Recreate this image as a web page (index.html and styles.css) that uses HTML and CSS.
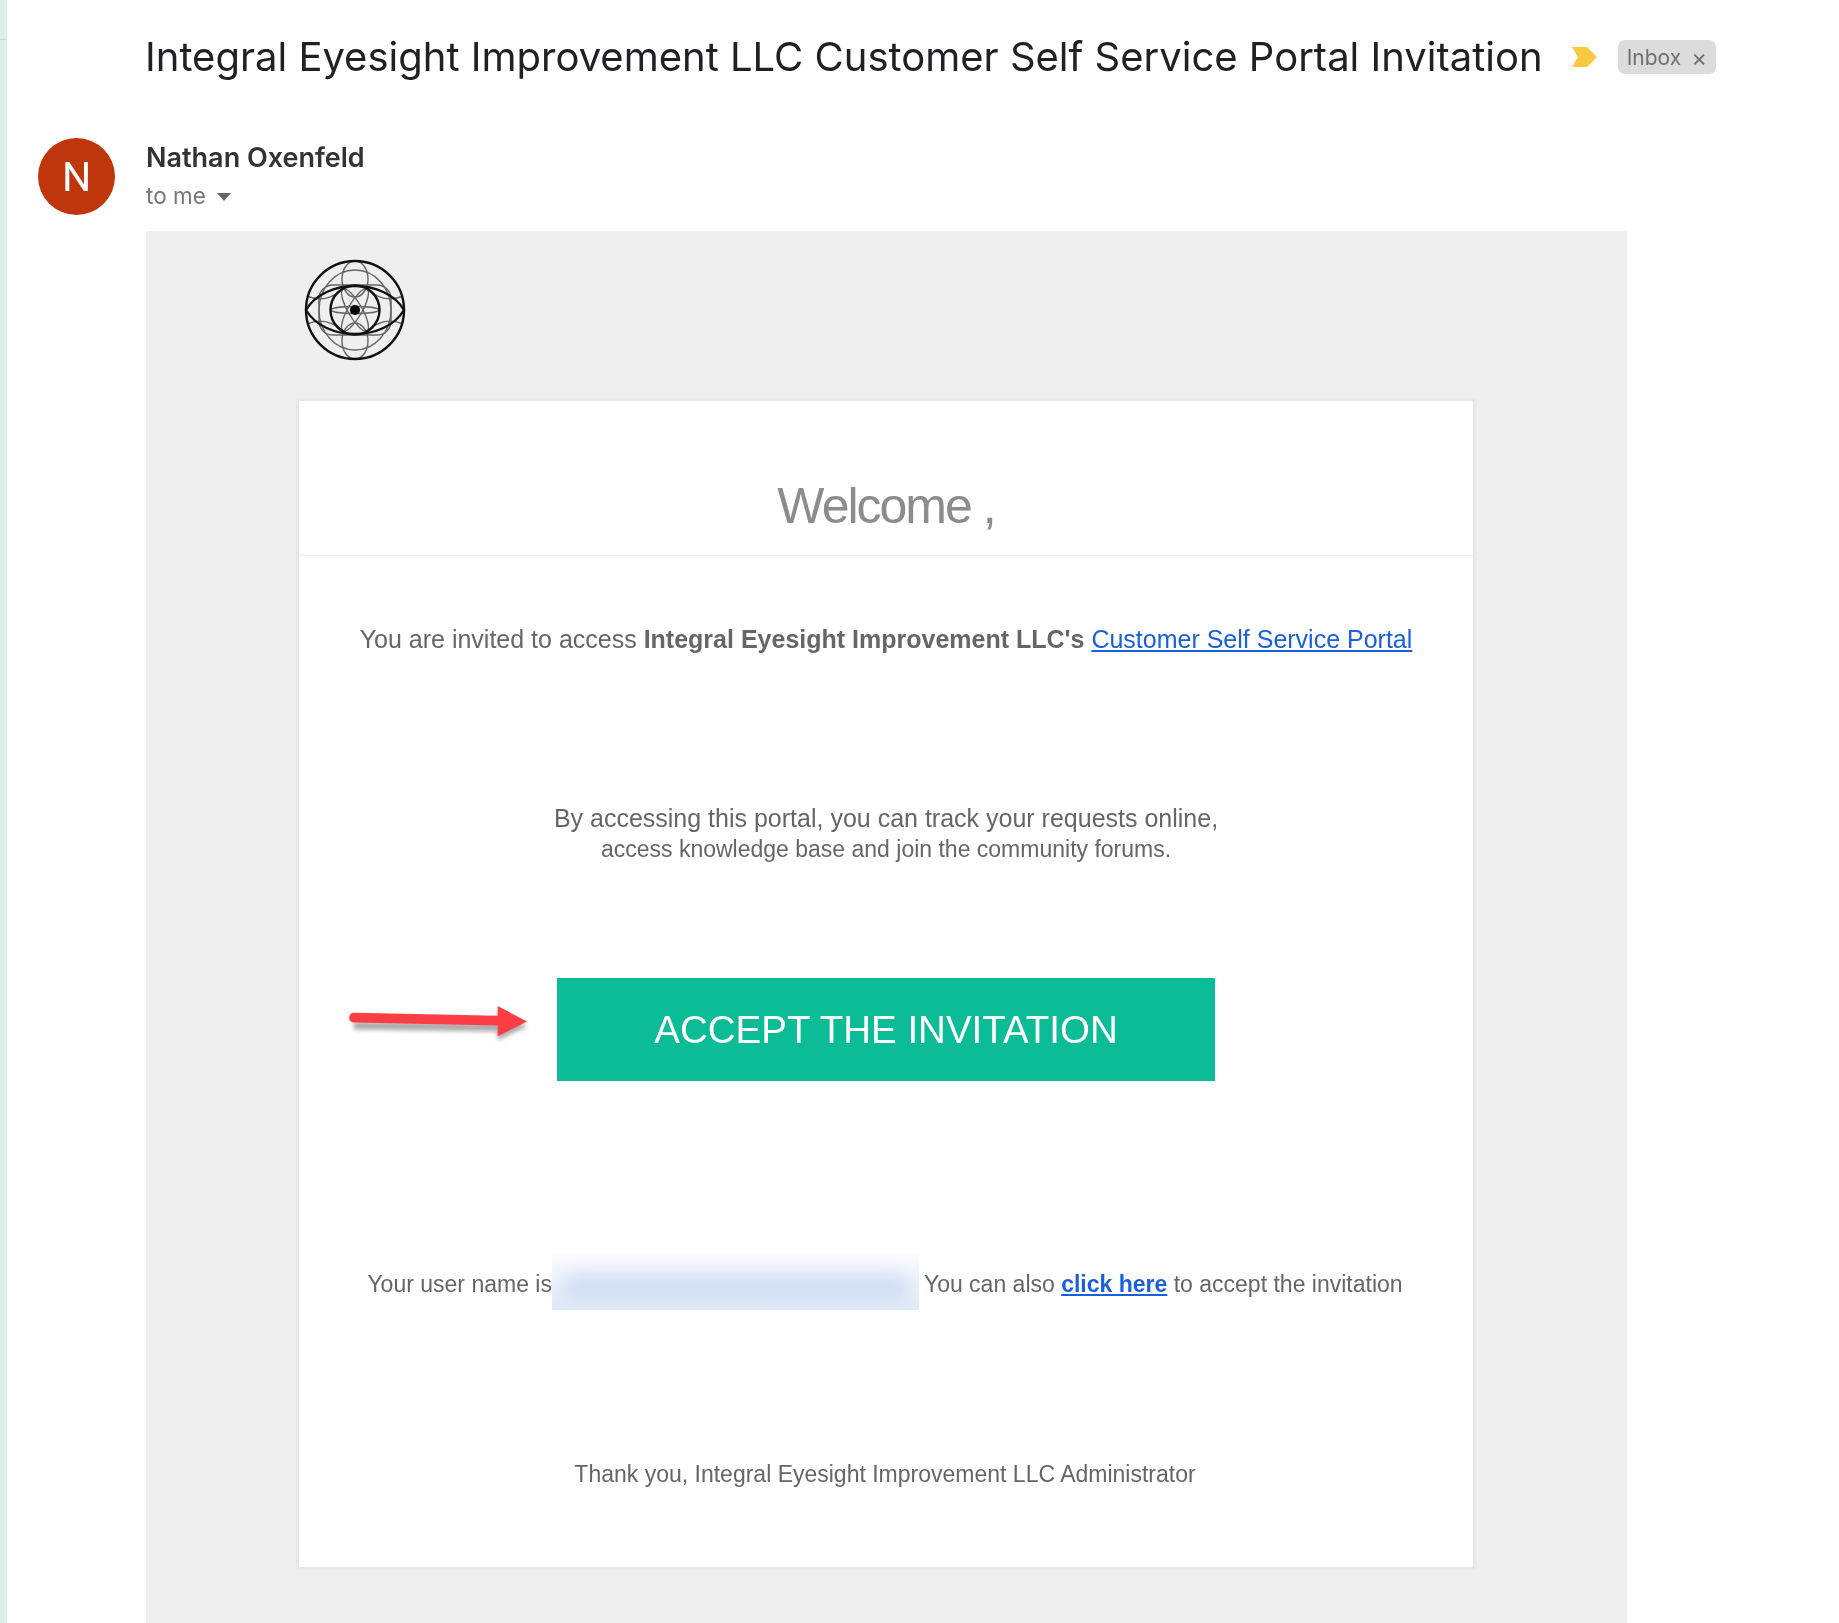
FILE: index.html
```html
<!DOCTYPE html>
<html lang="en">
<head>
<meta charset="utf-8">
<title>Integral Eyesight Improvement LLC Customer Self Service Portal Invitation</title>
<link rel="stylesheet" href="styles.css">
</head>
<body>
<div class="page">
  <div class="strip"><span class="strip-line"></span></div>
  <main class="mail">
    <header class="subject">
      <h1 class="subject-text">Integral Eyesight Improvement LLC Customer Self Service Portal Invitation</h1>
      <svg class="marker" viewBox="0 0 25 20" aria-hidden="true"><path d="M0 0H15L25 10L15 20H0L6 10Z"/></svg>
      <span class="chip">Inbox<span class="chip-x">×</span></span>
    </header>
    <div class="message">
      <div class="avatar">N</div>
      <div class="content">
        <div class="sender">
          <div class="sender-name">Nathan Oxenfeld</div>
          <div class="recipient">to me<span class="caret"></span></div>
        </div>
        <section class="panel">
          <svg class="logo" viewBox="-52 -52 104 104" aria-hidden="true">
            <g class="logo-thin">
              <ellipse rx="24" ry="3.5"/>
              <ellipse rx="24" ry="7" transform="rotate(60)"/>
              <ellipse rx="24" ry="7" transform="rotate(120)"/>
              <ellipse cy="-31" rx="13" ry="18"/>
              <ellipse cy="31" rx="13" ry="18"/>
              <rect x="-36" y="-25" width="72" height="50" rx="14"/>
              <ellipse rx="36" ry="40"/>
              <path d="M-48 -14Q-30 -6 -13 -20M48 -14Q30 -6 13 -20M-48 14Q-30 6 -13 20M48 14Q30 6 13 20"/>
            </g>
            <g class="logo-bold">
              <circle r="49"/>
              <circle r="24.5"/>
              <path d="M-49 0C-30 -32 30 -32 49 0C30 32 -30 32 -49 0Z"/>
            </g>
            <circle class="logo-dot" r="5"/>
          </svg>
          <article class="card">
            <h2 class="welcome">Welcome ,</h2>
            <p class="invite">You are invited to access <b>Integral Eyesight Improvement LLC's</b> <a href="#">Customer Self Service Portal</a></p>
            <p class="about">By accessing this portal, you can track your requests online,<br><span class="about-small">access knowledge base and join the community forums.</span></p>
            <div class="cta">
              <svg class="arrow" viewBox="0 0 190 44" aria-hidden="true">
                <path class="arrow-shadow" d="M6 15L153 17V3L183 20L153 34V25L6 23Z"/>
                <path class="arrow-body" d="M6 8L153 11V1L183 17L153 32V21L6 18A5 5 0 0 1 6 8Z"/>
              </svg>
              <a class="button" href="#">ACCEPT THE INVITATION</a>
            </div>
            <p class="username">Your user name is<span class="redacted"><span class="redacted-blur"></span></span>You can also <a href="#"><b>click here</b></a> to accept the invitation</p>
            <p class="thanks">Thank you, Integral Eyesight Improvement LLC Administrator</p>
          </article>
        </section>
      </div>
    </div>
  </main>
</div>
</body>
</html>
```
FILE: styles.css
```css
html, body {
  margin: 0;
  height: 100%;
  background: #fff;
}
.page {
  display: flex;
  height: 1623px;
  overflow: hidden;
  filter: blur(0.6px);
}
.strip {
  flex: none;
  width: 7px;
  background: #dff1e7;
  padding-top: 39px;
  box-sizing: border-box;
}
.strip-line {
  display: block;
  height: 1px;
  background: #d5d5d5;
}
.mail {
  flex: 1;
  min-width: 0;
}
.subject {
  display: flex;
  align-items: center;
  height: 114px;
  padding-left: 138px;
}
.subject-text {
  margin: 0;
  font: 400 40px/1 Inter, sans-serif;
  color: #202124;
  white-space: nowrap;
}
.marker {
  width: 25px;
  height: 20px;
  margin-left: 29px;
  fill: #f8c83f;
}
.chip {
  display: flex;
  align-items: center;
  height: 34px;
  margin-left: 21px;
  padding: 0 9px;
  border-radius: 7px;
  background: #dcdcdc;
  color: #707070;
  font: 400 21px Inter, sans-serif;
}
.chip-x {
  margin-left: 10px;
  font-size: 24px;
}
.message {
  display: flex;
}
.avatar {
  flex: none;
  display: flex;
  align-items: center;
  justify-content: center;
  width: 77px;
  height: 77px;
  margin: 24px 0 0 31px;
  border-radius: 50%;
  background: #bf360c;
  color: #fff;
  font: 400 41px Roboto, sans-serif;
}
.content {
  flex: none;
  width: 1481px;
  margin-left: 31px;
}
.sender {
  height: 117px;
  padding-top: 29px;
  box-sizing: border-box;
}
.sender-name {
  font: 600 27px/30px Inter, sans-serif;
  color: #333;
}
.recipient {
  display: flex;
  align-items: center;
  margin-top: 10px;
  font: 400 22.5px/26px Inter, sans-serif;
  color: #777;
}
.caret {
  width: 0;
  height: 0;
  margin: 2px 0 0 11px;
  border: 7px solid transparent;
  border-top: 8px solid #666;
  border-bottom: 0;
}
.panel {
  height: 1393px;
  padding-top: 27px;
  box-sizing: border-box;
  background: #efefef;
}
.logo {
  display: block;
  width: 104px;
  height: 104px;
  margin-left: 157px;
}
.logo-thin * {
  fill: none;
  stroke: #666;
  stroke-width: 1.4;
}
.logo-bold * {
  fill: none;
  stroke: #111;
  stroke-width: 2.4;
}
.logo-dot {
  fill: #000;
}
.card {
  width: 1180px;
  height: 1172px;
  margin: 36px 0 0 150px;
  box-sizing: border-box;
  border: 3px solid #e7e7e7;
  background: #fff;
  color: #666;
  font-family: "Liberation Sans", Arial, sans-serif;
  text-align: center;
}
.card a {
  color: #1a5fdc;
}
.welcome {
  margin: 0;
  height: 155px;
  padding-top: 75px;
  box-sizing: border-box;
  border-bottom: 1px solid #eee;
  font-size: 50px;
  line-height: 60px;
  font-weight: 400;
  letter-spacing: -2px;
  color: #8c8c8c;
}
.invite {
  margin: 67px 0 0;
  font-size: 25px;
  line-height: 32px;
}
.about {
  margin: 148px 0 0;
  font-size: 25px;
  line-height: 30px;
}
.about-small {
  font-size: 23px;
}
.cta {
  position: relative;
  display: flex;
  justify-content: center;
  margin-top: 114px;
}
.arrow {
  position: absolute;
  left: 49px;
  top: 27px;
  width: 186px;
  height: 43px;
}
.arrow-body {
  fill: #fb3e43;
}
.arrow-shadow {
  fill: #555;
  opacity: 0.5;
  filter: blur(2px);
  transform: translateY(2px);
}
.button {
  display: block;
  width: 658px;
  height: 103px;
  background: #0cbc97;
  color: #fff !important;
  font-size: 38.5px;
  line-height: 103px;
  text-decoration: none;
}
.username {
  display: flex;
  justify-content: center;
  align-items: center;
  height: 57px;
  padding: 5px 2px 0 0;
  box-sizing: border-box;
  margin: 172px 0 0;
  font-size: 23px;
  white-space: pre-wrap;
}
.redacted {
  flex: none;
  width: 367px;
  height: 57px;
  margin: -5px 5px 0 0;
  overflow: hidden;
  background: linear-gradient(#fbfcfe, #e2eaf8);
}
.redacted-blur {
  display: block;
  height: 22px;
  margin: 24px 12px 0;
  background: #c8d9f2;
  filter: blur(10px);
}
.thanks {
  margin: 150px 0 0;
  padding-right: 2px;
  font-size: 23px;
  line-height: 28px;
}
```
